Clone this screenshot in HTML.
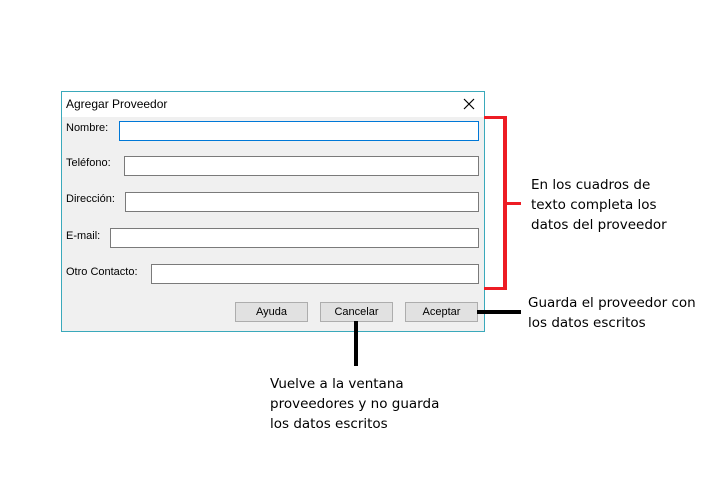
<!DOCTYPE html>
<html><head><meta charset="utf-8"><style>
body{margin:0;width:716px;height:497px;background:#fff;position:relative;overflow:hidden;font-family:"Liberation Sans",Tahoma,sans-serif}
.a{position:absolute}
.win{left:61px;top:91px;width:422px;height:239px;border:1px solid #3aa9bb;background:#f0f0f0}
.title{left:0;top:0;width:422px;height:25px;background:#fff;font-size:12px;color:#000}
.lbl{font-size:11px;color:#000}
.in{background:#fff;border:1px solid #7a7a7a;height:18px}
.btn{background:#e1e1e1;border:1px solid #adadad;height:18px;width:71px;font-size:11px;text-align:center;line-height:18px}
.note{font-family:"Comic Sans MS","DejaVu Sans",sans-serif;font-size:13.5px;line-height:20px;color:#000}
.r{background:#ed1c24}
.k{background:#000}
</style></head><body>
<div class="a win">
  <div class="a title"><span class="a" style="left:4px;top:5px">Agregar Proveedor</span>
  <svg class="a" style="left:400px;top:5px" width="14" height="14" viewBox="0 0 14 14"><path d="M2 2L12 12M12 2L2 12" stroke="#000" stroke-width="1.2"/></svg></div>
</div>
<span class="a lbl" style="left:66px;top:122px">Nombre:</span>
<div class="a in" style="left:119px;top:121px;width:358px;border-color:#0078d7"></div>
<span class="a lbl" style="left:66px;top:157px">Teléfono:</span>
<div class="a in" style="left:124px;top:156px;width:353px"></div>
<span class="a lbl" style="left:66px;top:193px">Dirección:</span>
<div class="a in" style="left:125px;top:192px;width:352px"></div>
<span class="a lbl" style="left:66px;top:230px">E-mail:</span>
<div class="a in" style="left:110px;top:228px;width:367px"></div>
<span class="a lbl" style="left:66px;top:266px">Otro Contacto:</span>
<div class="a in" style="left:151px;top:264px;width:326px"></div>
<div class="a btn" style="left:235px;top:302px">Ayuda</div>
<div class="a btn" style="left:320px;top:302px">Cancelar</div>
<div class="a btn" style="left:405px;top:302px">Aceptar</div>

<div class="a r" style="left:484px;top:116px;width:23px;height:3px"></div>
<div class="a r" style="left:503px;top:116px;width:4px;height:174px"></div>
<div class="a r" style="left:484px;top:287px;width:23px;height:3px"></div>
<div class="a r" style="left:507px;top:202px;width:14px;height:3px"></div>
<div class="a k" style="left:477px;top:310px;width:44px;height:4px"></div>
<div class="a k" style="left:354px;top:321px;width:4px;height:45px"></div>

<div class="a note" style="left:531px;top:175px">En los cuadros de<br>texto completa los<br>datos del proveedor</div>
<div class="a note" style="left:528px;top:293px">Guarda el proveedor con<br>los datos escritos</div>
<div class="a note" style="left:270px;top:374px">Vuelve a la ventana<br>proveedores y no guarda<br>los datos escritos</div>
</body></html>
